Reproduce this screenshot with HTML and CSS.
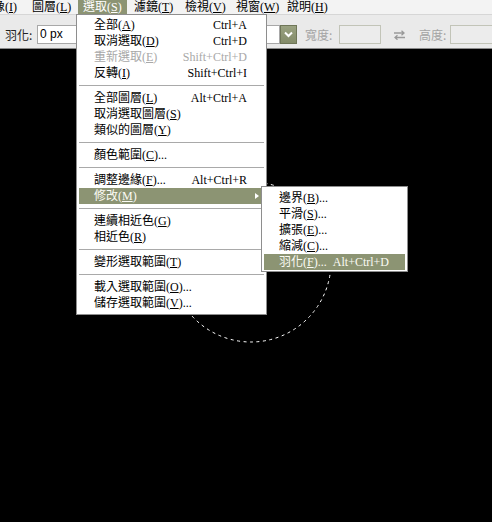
FILE: index.html
```html
<!DOCTYPE html>
<html lang="zh-Hant">
<head>
<meta charset="utf-8">
<title>選取選單</title>
<link rel="stylesheet" href="styles.css">
</head>
<body>
<div class="app">
  <div class="menubar">
    <div class="mb-item first">影像(<u>I</u>)</div>
    <div class="mb-item">圖層(<u>L</u>)</div>
    <div class="mb-item active">選取(<u>S</u>)</div>
    <div class="mb-item">濾鏡(<u>T</u>)</div>
    <div class="mb-item">檢視(<u>V</u>)</div>
    <div class="mb-item">視窗(<u>W</u>)</div>
    <div class="mb-item">說明(<u>H</u>)</div>
  </div>
  <div class="toolbar">
    <span class="lbl lbl-feather">羽化:</span>
    <div class="field feather">0 px</div>
    <div class="dropbtn">
      <svg width="9" height="7" viewBox="0 0 9 7"><path d="M1 1.5 L4.5 5 L8 1.5" fill="none" stroke="#fff" stroke-width="2"/></svg>
    </div>
    <span class="lbl lbl-dim lbl-w">寬度:</span>
    <div class="field dim box-w"></div>
    <svg class="swap" width="13" height="10" viewBox="0 0 13 10">
      <path d="M1 3 H11 M8.5 0.8 L11 3 L8.5 5.2" fill="none" stroke="#9a9a9a" stroke-width="1.3"/>
      <path d="M12 7.5 H2 M4.5 5.3 L2 7.5 L4.5 9.7" fill="none" stroke="#9a9a9a" stroke-width="1.3"/>
    </svg>
    <span class="lbl lbl-dim lbl-h">高度:</span>
    <div class="field dim box-h"></div>
  </div>
  <div class="canvas">
    <svg class="marquee" width="492" height="473" viewBox="0 0 492 473">
      <circle cx="251" cy="213" r="80" fill="none" stroke="#fff" stroke-width="1" stroke-dasharray="3 3.5"/>
    </svg>
  </div>
</div>

<div class="menu main-menu">
  <div class="row"><span>全部(<u>A</u>)</span><span class="sc">Ctrl+A</span></div>
  <div class="row"><span>取消選取(<u>D</u>)</span><span class="sc">Ctrl+D</span></div>
  <div class="row disabled"><span>重新選取(<u>E</u>)</span><span class="sc">Shift+Ctrl+D</span></div>
  <div class="row"><span>反轉(<u>I</u>)</span><span class="sc">Shift+Ctrl+I</span></div>
  <div class="sep"></div>
  <div class="row"><span>全部圖層(<u>L</u>)</span><span class="sc">Alt+Ctrl+A</span></div>
  <div class="row"><span>取消選取圖層(<u>S</u>)</span></div>
  <div class="row"><span>類似的圖層(<u>Y</u>)</span></div>
  <div class="sep"></div>
  <div class="row"><span>顏色範圍(<u>C</u>)...</span></div>
  <div class="sep"></div>
  <div class="row"><span>調整邊緣(<u>F</u>)...</span><span class="sc">Alt+Ctrl+R</span></div>
  <div class="row hl"><span>修改(<u>M</u>)</span><span class="arrow"></span></div>
  <div class="sep"></div>
  <div class="row"><span>連續相近色(<u>G</u>)</span></div>
  <div class="row"><span>相近色(<u>R</u>)</span></div>
  <div class="sep"></div>
  <div class="row"><span>變形選取範圍(<u>T</u>)</span></div>
  <div class="sep"></div>
  <div class="row"><span>載入選取範圍(<u>O</u>)...</span></div>
  <div class="row"><span>儲存選取範圍(<u>V</u>)...</span></div>
</div>

<div class="menu sub-menu">
  <div class="row"><span>邊界(<u>B</u>)...</span></div>
  <div class="row"><span>平滑(<u>S</u>)...</span></div>
  <div class="row"><span>擴張(<u>E</u>)...</span></div>
  <div class="row"><span>縮減(<u>C</u>)...</span></div>
  <div class="row hl"><span>羽化(<u>F</u>)...</span><span class="sc">Alt+Ctrl+D</span></div>
</div>
</body>
</html>
```

FILE: styles.css
```css
html, body {
  margin: 0;
  padding: 0;
}
body {
  width: 492px;
  height: 522px;
  overflow: hidden;
  background: #000;
  position: relative;
  font-family: "Liberation Serif", "Noto Sans CJK TC", serif;
  font-size: 12px;
  color: #000;
}
u {
  text-decoration: underline;
  text-underline-offset: 1px;
}
.app {
  display: flex;
  flex-direction: column;
  height: 522px;
}

/* menu bar */
.menubar {
  display: flex;
  height: 14px;
  background: #f3f3f3;
  border-bottom: 1px solid #d6d6d6;
  white-space: nowrap;
}
.mb-item {
  width: 51px;
  flex: none;
  box-sizing: border-box;
  padding-left: 5px;
  line-height: 14px;
}
.mb-item.first {
  margin-left: -24px;
}
.mb-item.active {
  width: 49px;
  margin-right: 2px;
  background: #8c9473;
  color: #fff;
}

/* options bar */
.toolbar {
  display: flex;
  align-items: flex-start;
  height: 23px;
  padding: 10px 0 0 5px;
  background: #eaeaea;
  border-bottom: 1px solid #8a8a8a;
  white-space: nowrap;
}
.lbl {
  flex: none;
  line-height: 19px;
  font-family: "Noto Sans CJK TC", "Liberation Sans", sans-serif;
  font-size: 12px;
  color: #222;
}
.lbl-feather { width: 32px; }
.lbl-dim { color: #a4a4a4; }
.lbl-w { width: 34px; margin-left: 8px; }
.lbl-h { width: 31px; margin-left: 13px; }
.field {
  flex: none;
  box-sizing: border-box;
  height: 19px;
  border: 1px solid #a8a8a8;
  background: #fff;
  font-family: "Liberation Sans", sans-serif;
  font-size: 12px;
  line-height: 17px;
  padding-left: 2px;
}
.feather { width: 243px; }
.field.dim {
  background: #ececec;
  border-color: #c2c4b8;
}
.box-w { width: 42px; }
.box-h { width: 50px; }
.dropbtn {
  flex: none;
  box-sizing: border-box;
  width: 17px;
  height: 19px;
  background: linear-gradient(#9aa281, #838b69);
  border: 1px solid #6f7658;
  display: flex;
  align-items: center;
  justify-content: center;
}
.swap {
  flex: none;
  margin: 5px 0 0 12px;
}

/* canvas */
.canvas {
  flex: 1;
  position: relative;
  background: #000;
}
.marquee {
  position: absolute;
  left: 0;
  top: 0;
}

/* dropdown menus */
.menu {
  position: absolute;
  background: #fff;
  border: 1px solid #8e8e8e;
  box-sizing: border-box;
}
.main-menu {
  left: 76px;
  top: 14px;
  width: 191px;
  padding: 2px 0 3px;
}
.sub-menu {
  left: 261px;
  top: 186px;
  width: 147px;
  padding: 3px 0 1px;
}
.row {
  display: flex;
  justify-content: space-between;
  align-items: center;
  height: 16px;
  line-height: 16px;
  margin: 0 2px;
  padding: 0 17px 0 15px;
  white-space: nowrap;
  position: relative;
}
.sub-menu .row {
  padding: 0 16px 0 15px;
}
.row.disabled {
  color: #a8a8a8;
}
.row.hl {
  background: #8c9473;
  color: #fbfbf4;
}
.sep {
  height: 1px;
  margin: 4px 2px;
  background: #a9a9a9;
}
.arrow {
  position: absolute;
  right: 5px;
  top: 5px;
  width: 0;
  height: 0;
  border-left: 4px solid #fff;
  border-top: 3.5px solid transparent;
  border-bottom: 3.5px solid transparent;
}
```
